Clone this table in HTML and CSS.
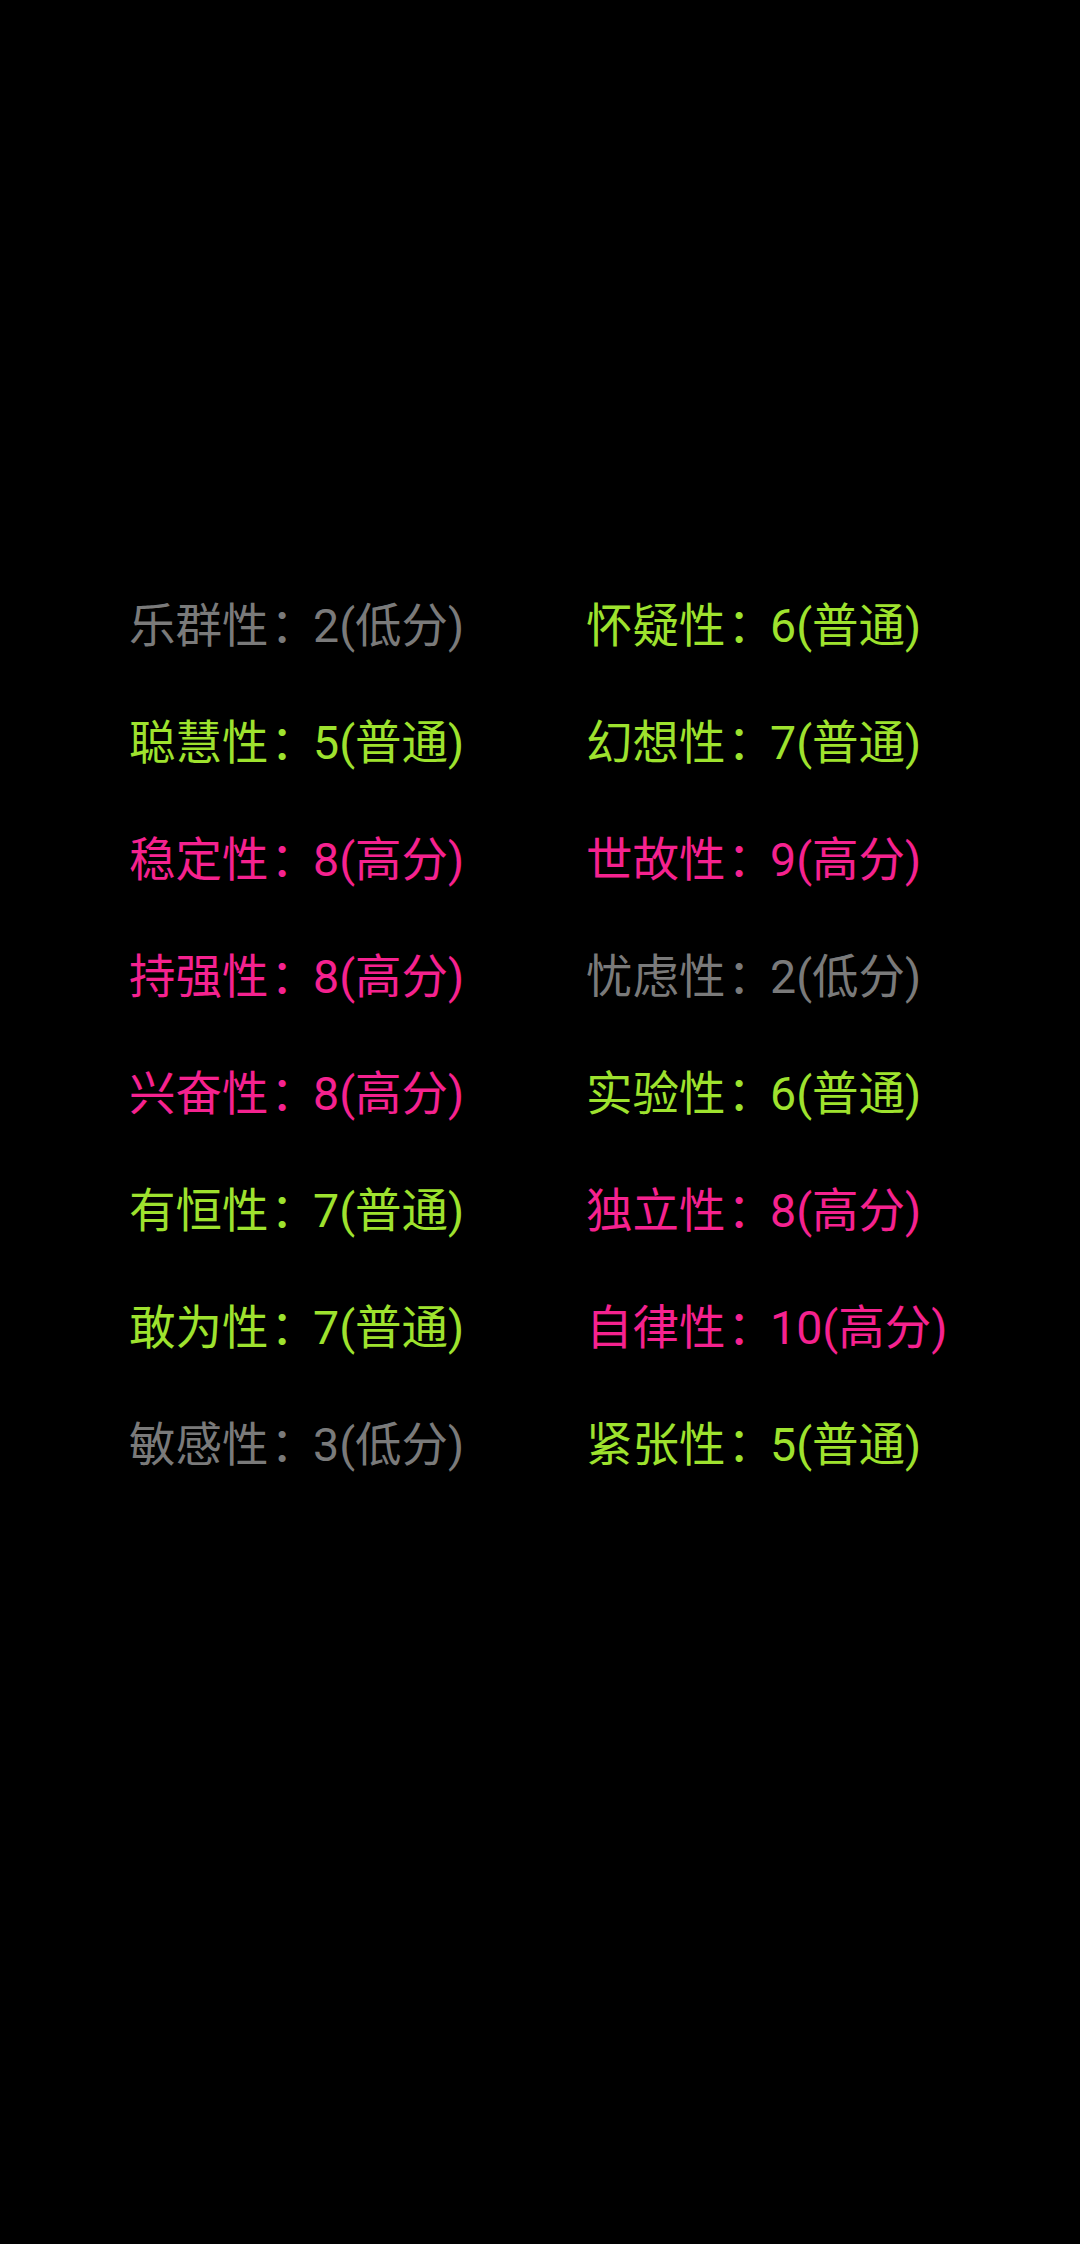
FILE: index.html
```html
<!DOCTYPE html>
<html lang="zh-CN">
<head>
<meta charset="utf-8">
<link rel="stylesheet" href="styles.css">
</head>
<body>
<main class="page">
  <div class="grid">
    <div class="item low">乐群性<span class="colon">：</span>2(低分)</div>
    <div class="item mid">怀疑性<span class="colon">：</span>6(普通)</div>
    <div class="item mid">聪慧性<span class="colon">：</span>5(普通)</div>
    <div class="item mid">幻想性<span class="colon">：</span>7(普通)</div>
    <div class="item high">稳定性<span class="colon">：</span>8(高分)</div>
    <div class="item high">世故性<span class="colon">：</span>9(高分)</div>
    <div class="item high">持强性<span class="colon">：</span>8(高分)</div>
    <div class="item low">忧虑性<span class="colon">：</span>2(低分)</div>
    <div class="item high">兴奋性<span class="colon">：</span>8(高分)</div>
    <div class="item mid">实验性<span class="colon">：</span>6(普通)</div>
    <div class="item mid">有恒性<span class="colon">：</span>7(普通)</div>
    <div class="item high">独立性<span class="colon">：</span>8(高分)</div>
    <div class="item mid">敢为性<span class="colon">：</span>7(普通)</div>
    <div class="item high">自律性<span class="colon">：</span>10(高分)</div>
    <div class="item low">敏感性<span class="colon">：</span>3(低分)</div>
    <div class="item mid">紧张性<span class="colon">：</span>5(普通)</div>
  </div>
</main>
</body>
</html>
```
FILE: styles.css
```css
html, body {
  margin: 0;
  padding: 0;
  background: #000;
}
.page {
  width: 1080px;
  height: 2244px;
  background: #000;
  padding-top: 568px;
  box-sizing: border-box;
}
.grid {
  display: grid;
  grid-template-columns: 457px auto;
  grid-auto-rows: 117px;
  padding-left: 129px;
}
.item {
  font-family: Roboto, "Noto Sans CJK SC", sans-serif;
  font-size: 46.5px;
  line-height: 117px;
  white-space: nowrap;
}
.colon {
  padding-left: 2px;
  letter-spacing: -4px;
}
.low { color: #7a7a7a; }
.mid { color: #9ee22e; }
.high { color: #f5228f; }
```
